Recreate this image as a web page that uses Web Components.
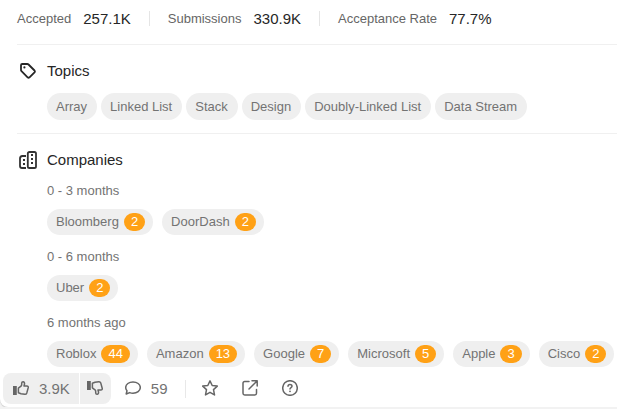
<!DOCTYPE html>
<html lang="en">
<head>
<meta charset="utf-8">
<title>Problem details</title>
<style>
html{background:#f2f2f2}
body{margin:0;font-family:"Liberation Sans",Arial,sans-serif;font-size:13px;line-height:16px;color:#737373;overflow:hidden}
</style>
</head>
<body>
<problem-panel>
  <stat-row>
    <stat-item label="Accepted">257.1K</stat-item>
    <stat-item label="Submissions">330.9K</stat-item>
    <stat-item label="Acceptance Rate">77.7%</stat-item>
  </stat-row>
  <info-section heading="Topics">
    <svg slot="icon" width="16" height="16" viewBox="0 0 16 16" fill="none" stroke="#262626" stroke-width="1.8" stroke-linejoin="round"><path d="M1 2.2Q1 1 2.2 1H7.3Q8 1 8.5 1.5L14.5 7.5Q15.3 8.4 14.5 9.3L9.5 14.3Q8.5 15.1 7.6 14.3L1.5 8.2Q1 7.7 1 7Z"/><circle cx="4.4" cy="4.4" r="1.1" fill="#262626" stroke="none"/></svg>
    <tag-list tight>
      <topic-tag>Array</topic-tag><topic-tag>Linked List</topic-tag><topic-tag>Stack</topic-tag><topic-tag>Design</topic-tag><topic-tag>Doubly-Linked List</topic-tag><topic-tag>Data Stream</topic-tag>
    </tag-list>
  </info-section>
  <info-section heading="Companies" last>
    <svg slot="icon" width="18" height="18" viewBox="0 0 18 18" fill="none" stroke="#333" stroke-width="1.8" stroke-linejoin="round"><path d="M7 5H3.4Q1 5 1 7.4V15Q1 17 3 17H7M10.6 1H15.4Q17 1 17 2.6V15.4Q17 17 15.4 17H10.4Q8.8 17 8.8 15.4V2.6Q8.8 1 10.6 1Z"/><path fill="#333" stroke="none" d="M12 3h2v2h-2zM12 7h2v2h-2zM12 11h2v2h-2zM4 8h2v2H4zM4 12h2v2H4z"/></svg>
    <company-period label="0 - 3 months">
      <company-tag count="2">Bloomberg</company-tag><company-tag count="2">DoorDash</company-tag>
    </company-period>
    <company-period label="0 - 6 months">
      <company-tag count="2">Uber</company-tag>
    </company-period>
    <company-period label="6 months ago">
      <company-tag count="44">Roblox</company-tag><company-tag count="13">Amazon</company-tag><company-tag count="7">Google</company-tag><company-tag count="5">Microsoft</company-tag><company-tag count="3">Apple</company-tag><company-tag count="2">Cisco</company-tag>
    </company-period>
  </info-section>
  <action-bar slot="footer"></action-bar>
</problem-panel>
<script>
function define(name, render) {
  customElements.define(name, class extends HTMLElement {
    constructor() {
      super();
      this.attachShadow({ mode: 'open' }).innerHTML = render(this);
    }
  });
}

define('problem-panel', () => `<style>
:host{display:block;background:#fff;border-bottom-left-radius:8px;box-shadow:0 1px 1px #ccc}
main{display:block;padding-left:17px}
</style><main><slot></slot></main><slot name="footer"></slot>`);

define('stat-row', () => `<style>
:host{display:flex;align-items:center;padding:7px 0 14px;border-bottom:1px solid #f0f0f0}
::slotted(:not(:first-child)){border-left:1px solid #e5e5e5;margin-left:18px;padding-left:18px}
</style><slot></slot>`);

define('stat-item', el => `<style>
:host{display:flex;align-items:center;gap:12px;height:15px;margin:4px 0;white-space:nowrap;color:#666}
strong{font-weight:400;font-size:15px;color:#262626}
</style><span>${el.getAttribute('label')}</span><strong><slot></slot></strong>`);

define('info-section', el => `<style>
:host{display:block;padding:16px 0 13px;border-bottom:1px solid #f0f0f0}
:host([last]){padding-bottom:0;border-bottom:0}
header{display:flex;align-items:center;gap:8px;height:20px}
.icon{display:flex;justify-content:center;width:22px}
h2{margin:0;font-size:15px;line-height:20px;font-weight:400;color:#262626}
.body{display:grid;gap:14px;padding:12px 0 0 30px}
:host([last]) .body{padding-top:13px}
</style><header><span class="icon"><slot name="icon"></slot></span><h2>${el.getAttribute('heading')}</h2></header><div class="body"><slot></slot></div>`);

define('tag-list', () => `<style>
:host{display:flex;gap:9px}
:host([tight]){gap:4px}
</style><slot></slot>`);

define('topic-tag', () => `<style>
:host{display:block}
a{display:block;padding:0 10px 0 9px;line-height:27px;border-radius:14px;background:#efefef;color:inherit;text-decoration:none;white-space:nowrap}
</style><a href="#"><slot></slot></a>`);

define('company-period', el => `<style>
:host{display:block}
h3{margin:0 0 10px;font-size:13px;line-height:16px;font-weight:400}
</style><h3>${el.getAttribute('label')}</h3><tag-list><slot></slot></tag-list>`);

define('company-tag', el => `<style>
:host{display:block}
a{display:flex;align-items:center;gap:5px;padding:0 8px 0 9px;height:26px;border-radius:13px;background:#efefef;color:inherit;text-decoration:none;white-space:nowrap}
b{font-weight:400;line-height:18px;padding:0 7px;border-radius:9px;background:#ffa116;color:#fff}
</style><a href="#"><slot></slot><b>${el.getAttribute('count')}</b></a>`);

const thumb = '<path fill="#666" stroke="none" d="M0 6h3.8v9H0z"/><path d="M5.4 8.2L8 6.2Q8.7 5.5 8.7 4.2V3Q8.8 1.8 10 1.8Q11.8 2 11.5 4L11 6H13.8Q15.6 6.2 15.2 7.8L13.8 12.9Q13.3 14.4 11.8 14.3L8 13.8L5.4 12.8Z"/>';
define('action-bar', () => `<style>
:host{display:flex;align-items:center;padding:6px 3px 3px;color:#737373}
button{display:flex;align-items:center;gap:10px;height:31px;margin:0;padding:0 10px 1px;border:0;background:none;color:inherit;font:15px "Liberation Sans",Arial,sans-serif}
svg{display:block;flex:none;width:16px;height:16px;fill:none;stroke:#666;stroke-width:1.5;stroke-linejoin:round;stroke-linecap:round}
.votes{display:flex;gap:1px;margin-right:4px}
.votes button{background:#efefef}
.votes .up{border-radius:8px 0 0 8px;padding-right:9px}
.votes .down{border-radius:0 8px 8px 0;padding:0 8px 1px 7px}
.flip{transform:scaleY(-1)}
.rule{width:1px;height:18px;background:#e8e8e8;margin:0 6px 0 7px}
.tools{display:flex;gap:4px}
</style>
<div class="votes">
<button class="up" aria-label="Like, 3.9K"><svg viewBox="0 0 16 16">${thumb}</svg><span>3.9K</span></button>
<button class="down" aria-label="Dislike"><svg class="flip" viewBox="0 0 16 16">${thumb}</svg></button>
</div>
<button aria-label="Comments, 59"><svg viewBox="0 0 16 16"><path d="M1.2 14L2 10.7Q.7 9.4.7 7.5C.7 4.2 4 2 8 2s7.3 2.2 7.3 5.5S12 13.2 8 13.2Q6.3 13.2 4.7 12.6Z"/></svg><span>59</span></button>
<span class="rule"></span>
<div class="tools">
<button aria-label="Favorite"><svg viewBox="0 0 16 16"><path d="M8 .9L10.2 5.5L15.3 6.1L11.5 9.6L12.5 14.9L8 12.3L3.5 14.9L4.5 9.6L.7 6.1L5.8 5.5Z"/></svg></button>
<button aria-label="Share"><svg viewBox="0 0 16 16"><path d="M7 1.5H2.7Q1 1.5 1 3.2V13.3Q1 15 2.7 15H12.8Q14.5 15 14.5 13.3V9.5M10 .8H15.2V6M15 1L7 9"/></svg></button>
<button aria-label="Help"><svg viewBox="0 0 16 16"><circle cx="8" cy="8" r="7.3"/><path d="M6 6.3C6 3.7 10 3.8 10 6.2C10 7.6 8 7.5 8 9"/><circle cx="8" cy="11.3" r=".9" fill="#666" stroke="none"/></svg></button>
</div>`);
</script>
</body>
</html>
